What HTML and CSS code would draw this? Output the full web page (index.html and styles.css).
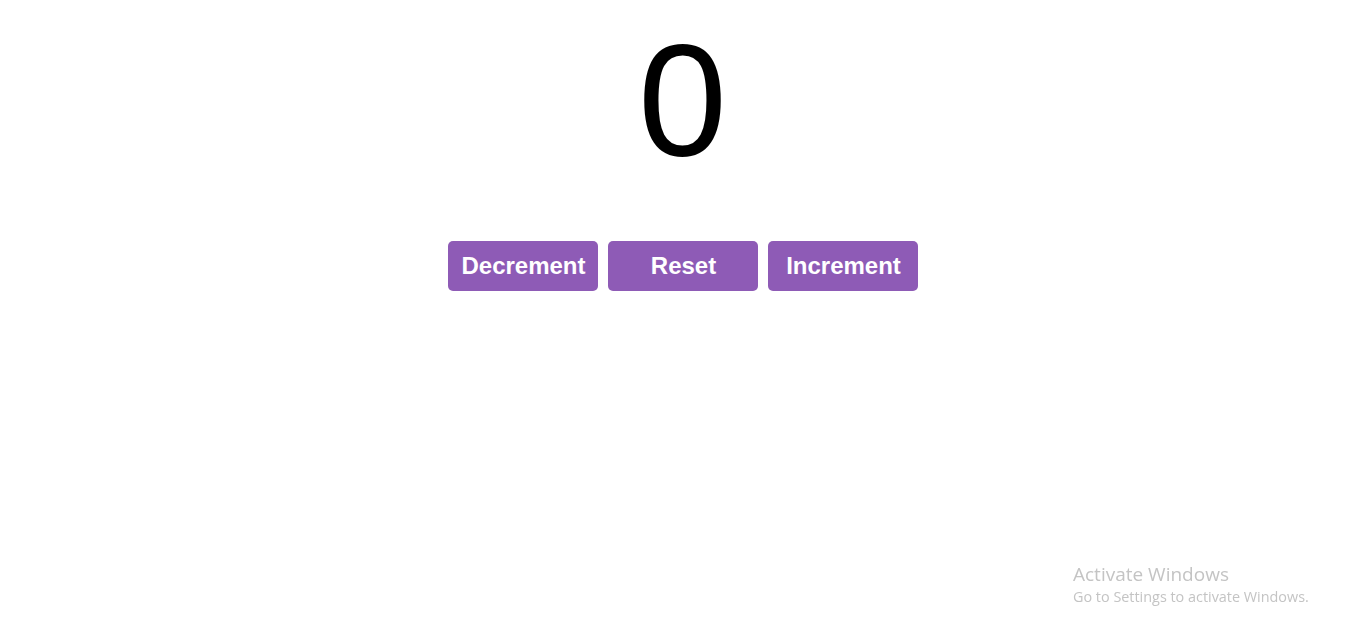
FILE: index.html
```html
<!DOCTYPE html>
<html>
<head>
<meta charset="utf-8">
<title>Counter</title>
<link rel="stylesheet" href="styles.css">
</head>
<body>
<main class="counter-app">
  <div class="count">0</div>
  <div class="controls">
    <button class="btn">Decrement</button>
    <button class="btn">Reset</button>
    <button class="btn">Increment</button>
  </div>
</main>
<div class="watermark">
  <div class="wm-title">Activate Windows</div>
  <div class="wm-sub">Go to Settings to activate Windows.</div>
</div>
</body>
</html>
```
FILE: styles.css
```css
html, body {
  margin: 0;
  padding: 0;
  background: #ffffff;
  font-family: "Liberation Sans", Arial, sans-serif;
}
.counter-app {
  display: flex;
  flex-direction: column;
  align-items: center;
  padding-left: 5px;
}
.count {
  font-size: 160px;
  line-height: 200px;
  color: #000;
}
.controls {
  display: flex;
  gap: 10px;
  margin-top: 41px;
}
.btn {
  width: 150px;
  height: 50px;
  border: none;
  border-radius: 5px;
  background: #8e5bb6;
  color: #fff;
  font-family: "Liberation Sans", Arial, sans-serif;
  font-weight: bold;
  font-size: 24px;
  padding: 0 0 0 2px;
  cursor: pointer;
}
.watermark {
  position: fixed;
  left: 1073px;
  top: 562px;
  color: #c4c4c4;
  font-family: "Open Sans", "Noto Sans", sans-serif;
}
.wm-title {
  font-size: 19px;
  line-height: 24px;
}
.wm-sub {
  font-size: 14.4px;
  line-height: 22px;
}
```
